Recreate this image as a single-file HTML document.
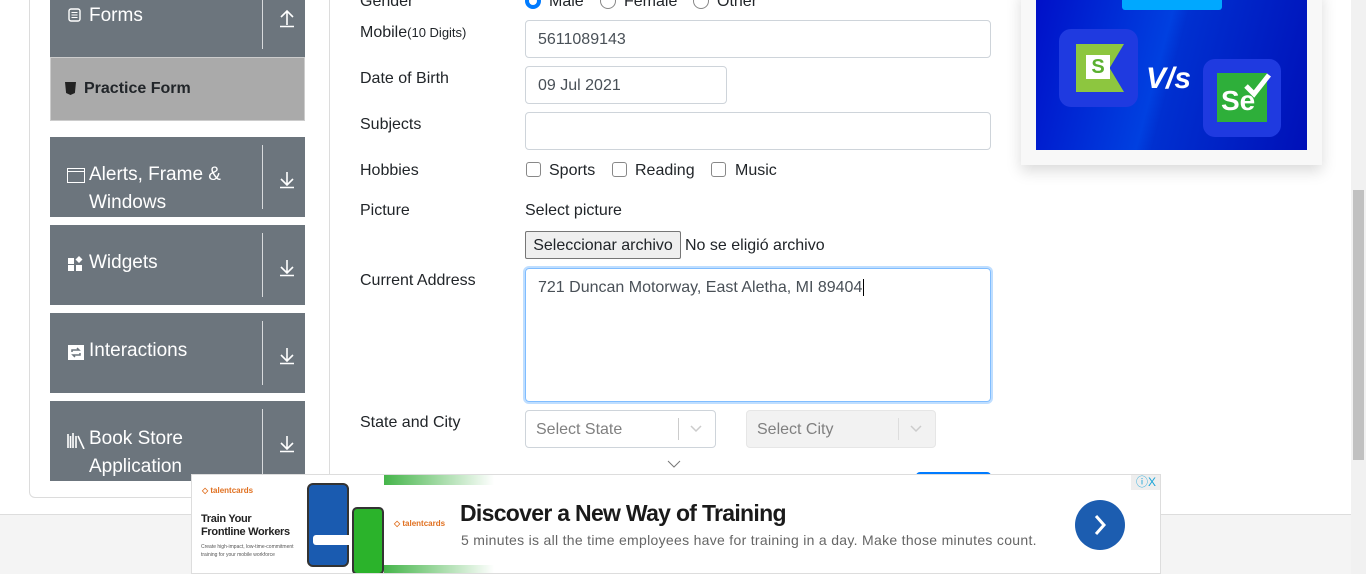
<!DOCTYPE html>
<html><head><meta charset="utf-8"><style>
*{box-sizing:border-box;margin:0;padding:0}
body{width:1366px;height:574px;overflow:hidden;position:relative;background:#fff;font-family:"Liberation Sans",Arial,sans-serif;color:#212529}
.a{position:absolute}
.grp{position:absolute;left:50px;width:255px;background:#6c757d;color:#fff;font-size:19px}
.grp .t{position:absolute;left:39px;line-height:28px}
.grp .sep{position:absolute;left:212px;width:1px;background:#d8dadc}
.grp .ar{position:absolute;left:229px;width:16px;height:20px}
.lbl{position:absolute;left:360px;font-size:16px;color:#212529}
.inp{position:absolute;border:1px solid #ced4da;border-radius:4px;background:#fff;font-size:16px;color:#495057;padding-left:12px}
.cb{position:absolute;width:15px;height:15px;border:1px solid #888;border-radius:3px;background:#fff}
.txt{position:absolute;font-size:16px;color:#212529}
</style></head><body>
<!-- left panel -->
<div class="a" style="left:29px;top:-10px;width:301px;height:508px;border:1px solid #dcdcdc;border-radius:0 0 6px 6px"></div>
<div class="grp" style="top:0;height:57px"><div class="t" style="top:2px">Forms</div><div class="sep" style="top:0;height:49px"></div>
<svg class="a" style="left:18px;top:8px" width="13" height="14"><rect x="1" y="1" width="11" height="12" rx="2" fill="none" stroke="#fff" stroke-width="1.4"/><path d="M3.5 4.5h6M3.5 7h6M3.5 9.5h6" stroke="#fff"/></svg>
<svg class="ar" style="top:8px" viewBox="0 0 16 20"><path d="M8 17V3M2 9l6-6 6 6M1 18.5h14" stroke="#fff" stroke-width="1.6" fill="none"/></svg></div>
<div class="a" style="left:50px;top:57px;width:255px;height:64px;background:#aaa;border:1px solid #ccc"></div>
<div class="a" style="left:65px;top:82px;width:11px;height:13px;background:#222;clip-path:polygon(0 0,100% 0,90% 85%,50% 100%,10% 85%)"></div>
<div class="a" style="left:84px;top:80px;font-size:16px;font-weight:bold;color:#212529">Practice Form</div>
<div class="grp" style="top:137px;height:80px"><div class="t" style="top:24px">Alerts, Frame &amp;<br>Windows</div><div class="sep" style="top:8px;height:64px"></div>
<svg class="a" style="left:17px;top:31px" width="18" height="15"><rect x=".5" y=".5" width="17" height="14" fill="none" stroke="#fff"/><path d="M.5 3.5h17" stroke="#fff"/></svg>
<svg class="ar" style="top:32px" viewBox="0 0 16 20"><path d="M8 3v13M2 10l6 6 6-6M1 18.5h14" stroke="#fff" stroke-width="1.6" fill="none"/></svg></div>
<div class="grp" style="top:225px;height:80px"><div class="t" style="top:24px">Widgets</div><div class="sep" style="top:8px;height:64px"></div>
<svg class="a" style="left:18px;top:31px" width="16" height="16"><rect x="0" y="2" width="6" height="6" fill="#fff"/><rect x="0" y="9" width="6" height="6" fill="#fff"/><rect x="8" y="9" width="6" height="6" fill="#fff"/><path d="M11 0l3.5 3.5L11 7 7.5 3.5z" fill="#fff"/></svg>
<svg class="ar" style="top:32px" viewBox="0 0 16 20"><path d="M8 3v13M2 10l6 6 6-6M1 18.5h14" stroke="#fff" stroke-width="1.6" fill="none"/></svg></div>
<div class="grp" style="top:313px;height:80px"><div class="t" style="top:24px">Interactions</div><div class="sep" style="top:8px;height:64px"></div>
<svg class="a" style="left:18px;top:32px" width="16" height="15"><rect width="16" height="15" fill="#fff"/><path d="M4 7V5h7l-2-2M12 8v2H5l2 2" stroke="#6c757d" stroke-width="1.5" fill="none"/></svg>
<svg class="ar" style="top:32px" viewBox="0 0 16 20"><path d="M8 3v13M2 10l6 6 6-6M1 18.5h14" stroke="#fff" stroke-width="1.6" fill="none"/></svg></div>
<div class="grp" style="top:401px;height:80px"><div class="t" style="top:24px">Book Store<br>Application</div><div class="sep" style="top:8px;height:72px"></div>
<svg class="a" style="left:17px;top:31px" width="19" height="17"><path d="M1 2v14M3.5 4v12M6 1v15M9 4v12M11 4l6 13" stroke="#fff" stroke-width="1.6"/></svg>
<svg class="ar" style="top:32px" viewBox="0 0 16 20"><path d="M8 3v13M2 10l6 6 6-6M1 18.5h14" stroke="#fff" stroke-width="1.6" fill="none"/></svg></div>

<!-- form -->
<div class="lbl" style="top:-7px">Gender</div>
<div class="a" style="left:525px;top:-7px;width:16px;height:16px;border-radius:50%;border:4px solid #007bff;background:#fff"></div>
<div class="txt" style="left:549px;top:-7px">Male</div>
<div class="a" style="left:600px;top:-7px;width:16px;height:16px;border-radius:50%;border:1px solid #888"></div>
<div class="txt" style="left:624px;top:-7px">Female</div>
<div class="a" style="left:693px;top:-7px;width:16px;height:16px;border-radius:50%;border:1px solid #888"></div>
<div class="txt" style="left:717px;top:-7px">Other</div>

<div class="lbl" style="top:24px">Mobile<span style="font-size:13px">(10 Digits)</span></div>
<div class="inp" style="left:525px;top:20px;width:466px;height:38px;line-height:38px">5611089143</div>
<div class="lbl" style="top:70px">Date of Birth</div>
<div class="inp" style="left:525px;top:66px;width:202px;height:38px;line-height:38px">09 Jul 2021</div>
<div class="lbl" style="top:116px">Subjects</div>
<div class="inp" style="left:525px;top:112px;width:466px;height:38px"></div>
<div class="lbl" style="top:162px">Hobbies</div>
<div class="cb" style="left:526px;top:162px"></div><div class="txt" style="left:549px;top:162px">Sports</div>
<div class="cb" style="left:612px;top:162px"></div><div class="txt" style="left:635px;top:162px">Reading</div>
<div class="cb" style="left:711px;top:162px"></div><div class="txt" style="left:735px;top:162px">Music</div>
<div class="lbl" style="top:202px">Picture</div>
<div class="txt" style="left:525px;top:202px">Select picture</div>
<div class="a" style="left:525px;top:231px;width:156px;height:28px;border:1px solid #767676;border-radius:2px;background:#efefef;font-size:16px;line-height:27px;text-align:center">Seleccionar archivo</div>
<div class="txt" style="left:685px;top:237px">No se eligió archivo</div>
<div class="lbl" style="top:272px">Current Address</div>
<div class="a" style="left:525px;top:268px;width:466px;height:134px;border:1px solid #80bdff;border-radius:4px;box-shadow:0 0 0 2px rgba(0,123,255,.25);font-size:16px;color:#495057;padding:10px 12px">721 Duncan Motorway, East Aletha, MI 89404<span style="border-left:1px solid #000;margin-left:1px"></span></div>
<div class="lbl" style="top:414px">State and City</div>
<div class="inp" style="left:525px;top:410px;width:191px;height:38px;line-height:38px;color:#808080;padding-left:10px">Select State</div>
<div class="a" style="left:678px;top:418px;width:1px;height:22px;background:#ccc"></div>
<svg class="a" style="left:689px;top:424px" width="14" height="10"><path d="M2 2l5 5 5-5" stroke="#ccc" stroke-width="1.5" fill="none"/></svg>
<div class="inp" style="left:746px;top:410px;width:190px;height:38px;line-height:38px;background:#f2f2f2;border-color:#e6e6e6;color:#808080;padding-left:10px">Select City</div>
<div class="a" style="left:898px;top:418px;width:1px;height:22px;background:#ddd"></div>
<svg class="a" style="left:909px;top:424px" width="14" height="10"><path d="M2 2l5 5 5-5" stroke="#ccc" stroke-width="1.5" fill="none"/></svg>
<svg class="a" style="left:667px;top:460px" width="14" height="9"><path d="M1 1l6 6 6-6" stroke="#777" stroke-width="1" fill="none"/></svg>
<div class="a" style="left:916px;top:472px;width:75px;height:10px;background:#007bff;border-radius:4px 4px 0 0"></div>

<!-- right ad -->
<div class="a" style="left:1021px;top:-10px;width:301px;height:175px;background:#f8f8f8;box-shadow:0 6px 14px rgba(0,0,0,.15)"></div>
<div class="a" style="left:1036px;top:0;width:271px;height:150px;background:linear-gradient(105deg,#0010c8 0%,#0040e0 45%,#0030d0 50%,#0010b8 100%);overflow:hidden">
<div class="a" style="left:86px;top:0;width:100px;height:10px;background:#00a8ff;border-radius:0 0 3px 3px"></div>
<div class="a" style="left:23px;top:29px;width:79px;height:78px;background:#1f3ae0;border-radius:12px"></div>
<div class="a" style="left:40px;top:44px;width:48px;height:48px;background:#8dc63f;clip-path:polygon(0 0,100% 0,70% 50%,100% 100%,0 100%)"></div>
<div class="a" style="left:50px;top:55px;width:24px;height:24px;background:#fff;color:#5ab030;font-weight:bold;font-size:20px;text-align:center;line-height:24px">S</div>
<div class="a" style="left:110px;top:62px;color:#fff;font-weight:bold;font-size:30px;font-style:italic">V/s</div>
<div class="a" style="left:167px;top:59px;width:78px;height:78px;background:#1f3ae0;border-radius:12px"></div>
<div class="a" style="left:181px;top:73px;width:50px;height:49px;background:#2eaf3a;color:#fff;font-weight:bold;font-size:28px;padding:12px 0 0 4px">Se</div>
<svg class="a" style="left:207px;top:72px" width="28" height="26"><path d="M3 14l8 8L26 3" stroke="#fff" stroke-width="5" fill="none"/></svg>
</div>

<!-- footer band -->
<div class="a" style="left:0;top:514px;width:1351px;height:60px;background:#f4f4f4;border-top:1px solid #ddd"></div>

<!-- bottom ad -->
<div class="a" style="left:191px;top:474px;width:970px;height:100px;background:#fff;border:1px solid #ddd;overflow:hidden">
<div class="a" style="left:10px;top:11px;font-size:8px;color:#e07020;font-weight:bold">◇ talentcards</div>
<div class="a" style="left:9px;top:38px;font-size:11px;font-weight:bold;color:#222;line-height:13px;letter-spacing:-.3px">Train Your<br>Frontline Workers</div>
<div class="a" style="left:9px;top:68px;font-size:5px;color:#555;line-height:8px">Create high-impact, low-time-commitment<br>training for your mobile workforce</div>
<div class="a" style="left:115px;top:8px;width:42px;height:84px;background:#1a5bb0;border-radius:6px;border:2px solid #333"></div>
<div class="a" style="left:121px;top:60px;width:40px;height:10px;background:#fff;border-radius:3px"></div>
<div class="a" style="left:160px;top:32px;width:32px;height:68px;background:#2bb32b;border-radius:5px;border:2px solid #333"></div>
<div class="a" style="left:192px;top:0;width:110px;height:100px;background:linear-gradient(90deg,#fff 0,#fff 60%,rgba(255,255,255,0) 100%)"></div>
<div class="a" style="left:192px;top:0;width:110px;height:10px;background:linear-gradient(90deg,#45b54a,#fff)"></div>
<div class="a" style="left:192px;top:90px;width:110px;height:10px;background:linear-gradient(90deg,#45b54a,#fff)"></div>
<div class="a" style="left:202px;top:44px;font-size:8px;color:#e07020;font-weight:bold">◇ talentcards</div>
<div class="a" style="left:268px;top:25px;font-size:23px;font-weight:bold;color:#1a1a1a;letter-spacing:-.7px">Discover a New Way of Training</div>
<div class="a" style="left:269px;top:57px;font-size:14px;color:#666;letter-spacing:.3px">5 minutes is all the time employees have for training in a day. Make those minutes count.</div>
<div class="a" style="left:883px;top:25px;width:50px;height:50px;border-radius:50%;background:#1c5db0"></div>
<svg class="a" style="left:898px;top:37px" width="20" height="26"><path d="M6 4l8 9-8 9" stroke="#fff" stroke-width="3" fill="none"/></svg>
<div class="a" style="left:939px;top:0;width:30px;height:15px;background:#eee;color:#1aa4d8;font-size:12px;line-height:15px;text-align:center">ⓘX</div>
</div>

<!-- scrollbar -->
<div class="a" style="left:1351px;top:0;width:15px;height:574px;background:#f1f1f1"></div>
<div class="a" style="left:1353px;top:190px;width:11px;height:270px;background:#c1c1c1"></div>
</body></html>
